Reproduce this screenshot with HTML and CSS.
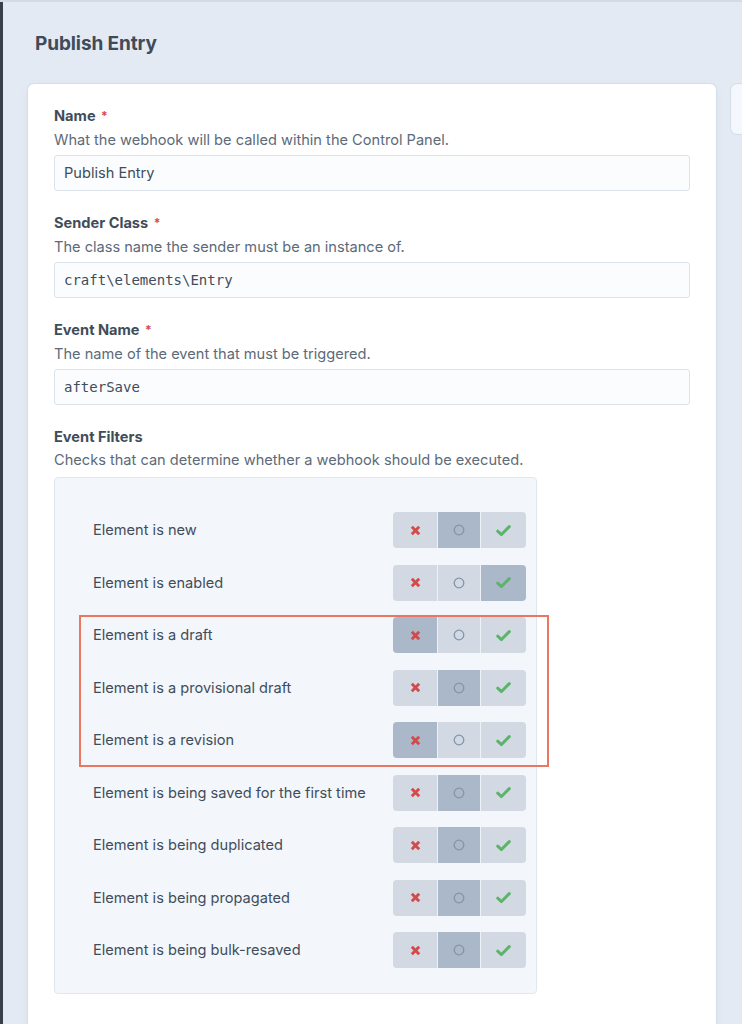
FILE: index.html
```html
<!DOCTYPE html>
<html>
<head>
<meta charset="utf-8">
<link rel="stylesheet" href="styles.css">
</head>
<body>
<div class="frame">
  <div class="sidebar-edge"></div>
  <main class="main">
    <h1 class="title">Publish Entry</h1>
    <div class="layout">
      <section class="card">
        <div class="field">
          <div class="label">Name <span class="req">*</span></div>
          <div class="instr">What the webhook will be called within the Control Panel.</div>
          <div class="input">Publish Entry</div>
        </div>
        <div class="field">
          <div class="label">Sender Class <span class="req">*</span></div>
          <div class="instr">The class name the sender must be an instance of.</div>
          <div class="input code">craft\elements\Entry</div>
        </div>
        <div class="field">
          <div class="label">Event Name <span class="req">*</span></div>
          <div class="instr">The name of the event that must be triggered.</div>
          <div class="input code">afterSave</div>
        </div>
        <div class="field">
          <div class="label">Event Filters</div>
          <div class="instr">Checks that can determine whether a webhook should be executed.</div>
          <div class="filters">
            <div class="highlight"></div>
            <div class="row"><span class="rlabel">Element is new</span><div class="tri"><span class="seg no"><svg viewBox="0 0 12 12"><path d="M2 2l8 8M10 2l-8 8"/></svg></span><span class="seg mid on"><svg viewBox="0 0 12 12"><circle cx="6" cy="6" r="4.8"/></svg></span><span class="seg yes"><svg viewBox="0 0 14 12"><path d="M1.6 6.6l3.5 3.2L12.4 2.4"/></svg></span></div></div>
            <div class="row"><span class="rlabel">Element is enabled</span><div class="tri"><span class="seg no"><svg viewBox="0 0 12 12"><path d="M2 2l8 8M10 2l-8 8"/></svg></span><span class="seg mid"><svg viewBox="0 0 12 12"><circle cx="6" cy="6" r="4.8"/></svg></span><span class="seg yes on"><svg viewBox="0 0 14 12"><path d="M1.6 6.6l3.5 3.2L12.4 2.4"/></svg></span></div></div>
            <div class="row"><span class="rlabel">Element is a draft</span><div class="tri"><span class="seg no on"><svg viewBox="0 0 12 12"><path d="M2 2l8 8M10 2l-8 8"/></svg></span><span class="seg mid"><svg viewBox="0 0 12 12"><circle cx="6" cy="6" r="4.8"/></svg></span><span class="seg yes"><svg viewBox="0 0 14 12"><path d="M1.6 6.6l3.5 3.2L12.4 2.4"/></svg></span></div></div>
            <div class="row"><span class="rlabel">Element is a provisional draft</span><div class="tri"><span class="seg no"><svg viewBox="0 0 12 12"><path d="M2 2l8 8M10 2l-8 8"/></svg></span><span class="seg mid on"><svg viewBox="0 0 12 12"><circle cx="6" cy="6" r="4.8"/></svg></span><span class="seg yes"><svg viewBox="0 0 14 12"><path d="M1.6 6.6l3.5 3.2L12.4 2.4"/></svg></span></div></div>
            <div class="row"><span class="rlabel">Element is a revision</span><div class="tri"><span class="seg no on"><svg viewBox="0 0 12 12"><path d="M2 2l8 8M10 2l-8 8"/></svg></span><span class="seg mid"><svg viewBox="0 0 12 12"><circle cx="6" cy="6" r="4.8"/></svg></span><span class="seg yes"><svg viewBox="0 0 14 12"><path d="M1.6 6.6l3.5 3.2L12.4 2.4"/></svg></span></div></div>
            <div class="row"><span class="rlabel">Element is being saved for the first time</span><div class="tri"><span class="seg no"><svg viewBox="0 0 12 12"><path d="M2 2l8 8M10 2l-8 8"/></svg></span><span class="seg mid on"><svg viewBox="0 0 12 12"><circle cx="6" cy="6" r="4.8"/></svg></span><span class="seg yes"><svg viewBox="0 0 14 12"><path d="M1.6 6.6l3.5 3.2L12.4 2.4"/></svg></span></div></div>
            <div class="row"><span class="rlabel">Element is being duplicated</span><div class="tri"><span class="seg no"><svg viewBox="0 0 12 12"><path d="M2 2l8 8M10 2l-8 8"/></svg></span><span class="seg mid on"><svg viewBox="0 0 12 12"><circle cx="6" cy="6" r="4.8"/></svg></span><span class="seg yes"><svg viewBox="0 0 14 12"><path d="M1.6 6.6l3.5 3.2L12.4 2.4"/></svg></span></div></div>
            <div class="row"><span class="rlabel">Element is being propagated</span><div class="tri"><span class="seg no"><svg viewBox="0 0 12 12"><path d="M2 2l8 8M10 2l-8 8"/></svg></span><span class="seg mid on"><svg viewBox="0 0 12 12"><circle cx="6" cy="6" r="4.8"/></svg></span><span class="seg yes"><svg viewBox="0 0 14 12"><path d="M1.6 6.6l3.5 3.2L12.4 2.4"/></svg></span></div></div>
            <div class="row"><span class="rlabel">Element is being bulk-resaved</span><div class="tri"><span class="seg no"><svg viewBox="0 0 12 12"><path d="M2 2l8 8M10 2l-8 8"/></svg></span><span class="seg mid on"><svg viewBox="0 0 12 12"><circle cx="6" cy="6" r="4.8"/></svg></span><span class="seg yes"><svg viewBox="0 0 14 12"><path d="M1.6 6.6l3.5 3.2L12.4 2.4"/></svg></span></div></div>
          </div>
        </div>
      </section>
      <aside class="side-card"></aside>
    </div>
  </main>
</div>
</body>
</html>
```

FILE: styles.css
```css
html, body {
  margin: 0;
  padding: 0;
  height: 100%;
  overflow: hidden;
}
body {
  background: #e4eaf3;
  font-family: Inter, "Noto Sans", "Liberation Sans", sans-serif;
  color: #3f4d5a;
}
.frame {
  display: flex;
  height: 1024px;
  border-top: 2px solid #d5dbe3;
  box-sizing: border-box;
  overflow: hidden;
}
.sidebar-edge {
  width: 3px;
  flex: none;
  background: #3b4048;
}
.main {
  flex: 1;
  min-width: 0;
  padding: 0 0 0 25px;
  overflow: hidden;
}
.title {
  margin: 0;
  padding: 32px 0 0 7px;
  height: 82px;
  box-sizing: border-box;
  font-size: 19px;
  line-height: 20px;
  font-weight: 700;
  color: #3f4b5a;
  letter-spacing: -0.1px;
}
.layout {
  display: flex;
  gap: 15px;
  align-items: flex-start;
}
.card {
  flex: none;
  width: 688px;
  height: 1000px;
  box-sizing: border-box;
  background: #fff;
  border-radius: 6px;
  box-shadow: 0 0 0 1px rgba(205, 216, 228, 0.6), 0 2px 6px rgba(200, 210, 225, 0.4);
  padding: 22px 26px 0 26px;
}
.side-card {
  flex: none;
  width: 40px;
  height: 50px;
  background: #f4f7fb;
  border-radius: 6px;
  box-shadow: 0 0 0 1px rgba(205, 216, 228, 0.7);
}
.field + .field {
  margin-top: 22px;
}
.label {
  font-size: 14.6px;
  line-height: 20px;
  font-weight: 700;
  color: #3f4d5a;
}
.req {
  color: #d54b4b;
  font-size: 12px;
  font-weight: 700;
  margin-left: 2px;
  position: relative;
  top: -1px;
}
.instr {
  margin-top: 3px;
  font-size: 14.6px;
  line-height: 20px;
  color: #5c6a79;
}
.input {
  margin-top: 5px;
  height: 36px;
  box-sizing: border-box;
  border: 1px solid #dde3eb;
  border-radius: 3px;
  background: #fbfcfe;
  padding: 0 9px;
  font-size: 14.6px;
  line-height: 34px;
  color: #3f4d5a;
}
.input.code {
  font-family: "DejaVu Sans Mono", "Liberation Mono", monospace;
  font-size: 14px;
}
.filters {
  position: relative;
  margin-top: 7px;
  width: 483px;
  box-sizing: border-box;
  background: #f3f6fb;
  border: 1px solid #e1e7ef;
  border-radius: 4px;
  padding: 34px 10px 25px 38px;
  display: flex;
  flex-direction: column;
  gap: 16.5px;
}
.highlight {
  position: absolute;
  left: 24px;
  top: 137px;
  width: 470px;
  height: 152px;
  box-sizing: border-box;
  border: 2px solid #ea7762;
  pointer-events: none;
}
.row {
  display: flex;
  align-items: center;
  justify-content: space-between;
  height: 36px;
}
.rlabel {
  font-size: 14.6px;
  color: #3f4d5a;
}
.tri {
  display: flex;
  height: 36px;
  border-radius: 4px;
  overflow: hidden;
  gap: 1px;
  background: #eef2f7;
}
.seg {
  display: flex;
  align-items: center;
  justify-content: center;
  background: #d2d9e3;
}
.seg.no { width: 44px; }
.seg.mid { width: 42px; }
.seg.yes { width: 45px; }
.seg.on { background: #abb8c9; }
.seg svg { display: block; }
.seg.no svg {
  width: 11px;
  height: 11px;
  stroke: #d24a4a;
  stroke-width: 3.2;
  fill: none;
}
.seg.mid svg {
  width: 12px;
  height: 12px;
  stroke: #8294ad;
  stroke-width: 1.3;
  fill: none;
}
.seg.yes svg {
  width: 15px;
  height: 13px;
  stroke: #5cb46b;
  stroke-width: 2.8;
  fill: none;
  stroke-linecap: round;
  stroke-linejoin: round;
}
```
